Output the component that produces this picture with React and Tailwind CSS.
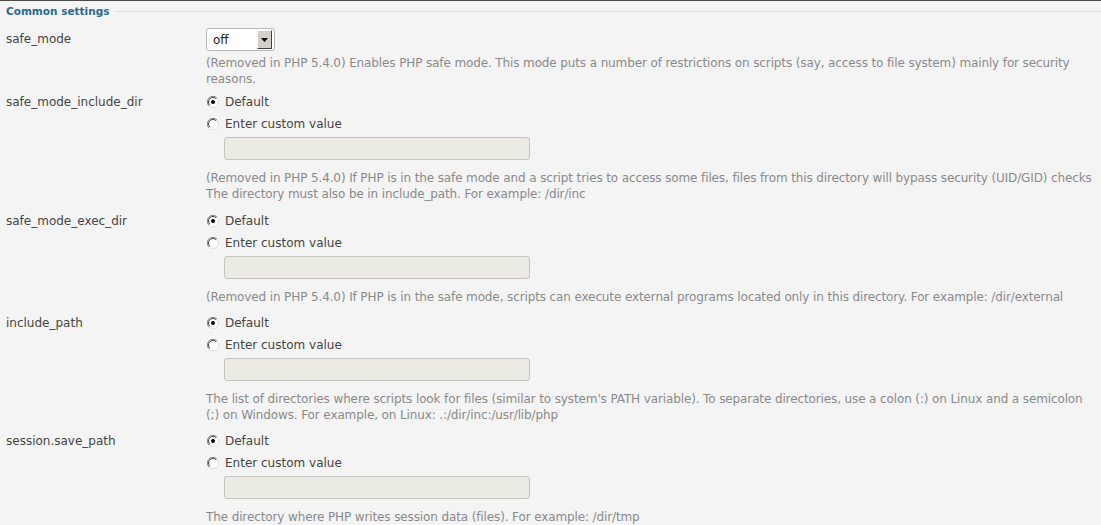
import React from 'react';

const Radio = ({ checked }) => (
  <svg width="12" height="12" viewBox="0 0 12 12" className="shrink-0">
    <circle cx="6" cy="6" r="5.5" fill="#fff" />
    <path d="M10 2 A5.5 5.5 0 0 0 2 10" fill="none" stroke="#808080" strokeWidth="1" />
    <path d="M9.2 2.8 A4.5 4.5 0 0 0 2.8 9.2" fill="none" stroke="#404040" strokeWidth="1" />
    <path d="M2 10 A5.5 5.5 0 0 0 10 2" fill="none" stroke="#e0e0e0" strokeWidth="1" />
    {checked && <circle cx="6" cy="6" r="2" fill="#000" />}
  </svg>
);

const Desc = ({ children, className = '' }) => (
  <p className={`text-[#8a8a8a] leading-[16px] tracking-[-0.12px] ${className}`}>{children}</p>
);

const PathRow = ({ label, desc, top = 'pt-[4px]' }) => (
  <div className={`flex ${top}`}>
    <div className="w-[206px] shrink-0 pl-[6px] leading-[22px] text-[#444]">{label}</div>
    <div className="flex-1 pr-[4px]">
      <label className="flex items-center gap-[6px] h-[22px] pl-[1px] text-[#444]">
        <Radio checked /> Default
      </label>
      <label className="flex items-center gap-[6px] h-[22px] pl-[1px] text-[#444]">
        <Radio /> Enter custom value
      </label>
      <div className="pl-[18px] mt-[2px]">
        <div className="w-[306px] h-[23px] bg-[#ebeae3] border border-[#c4c4c0] rounded-[3px]" />
      </div>
      <Desc className="mt-[10px]">{desc}</Desc>
    </div>
  </div>
);

export default function App() {
  return (
    <div className="min-h-screen bg-[#f4f4f4] border-t border-[#4a4a4a] text-[12px]" style={{ fontFamily: '"DejaVu Sans", sans-serif' }}>
      <div className="flex items-center h-[21px] pl-[6px]">
        <span className="font-bold text-[10.5px] text-[#2a6b8c]">Common settings</span>
        <div className="flex-1 ml-[6px] border-t border-[#dcdcdc]" />
      </div>

      <div className="flex pt-[6px]">
        <div className="w-[206px] shrink-0 pl-[6px] leading-[23px] text-[#444]">safe_mode</div>
        <div className="flex-1 pr-[4px]">
          <div className="flex items-center w-[69px] h-[23px] bg-white border border-[#b8b8b8] rounded-[3px] pl-[6px] pr-[2px] text-[#222]">
            <span className="flex-1">off</span>
            <div className="w-[15px] h-[19px] bg-[#d4d0c8] border border-[#fff] border-r-[#404040] border-b-[#404040] flex items-center justify-center">
              <svg width="7" height="4" viewBox="0 0 7 4"><path d="M0 0 H7 L3.5 4 Z" fill="#000" /></svg>
            </div>
          </div>
          <Desc className="mt-[4px]">
            (Removed in PHP 5.4.0) Enables PHP safe mode. This mode puts a number of restrictions on scripts (say, access to file system) mainly for security reasons.
          </Desc>
        </div>
      </div>

      <PathRow
        label="safe_mode_include_dir"
        desc="(Removed in PHP 5.4.0) If PHP is in the safe mode and a script tries to access some files, files from this directory will bypass security (UID/GID) checks The directory must also be in include_path. For example: /dir/inc"
      />
      <PathRow
        top="pt-[8px]"
        label="safe_mode_exec_dir"
        desc="(Removed in PHP 5.4.0) If PHP is in the safe mode, scripts can execute external programs located only in this directory. For example: /dir/external"
      />
      <PathRow
        top="pt-[7px]"
        label="include_path"
        desc="The list of directories where scripts look for files (similar to system's PATH variable). To separate directories, use a colon (:) on Linux and a semicolon (;) on Windows. For example, on Linux: .:/dir/inc:/usr/lib/php"
      />
      <PathRow
        top="pt-[7px]"
        label="session.save_path"
        desc="The directory where PHP writes session data (files). For example: /dir/tmp"
      />
    </div>
  );
}
